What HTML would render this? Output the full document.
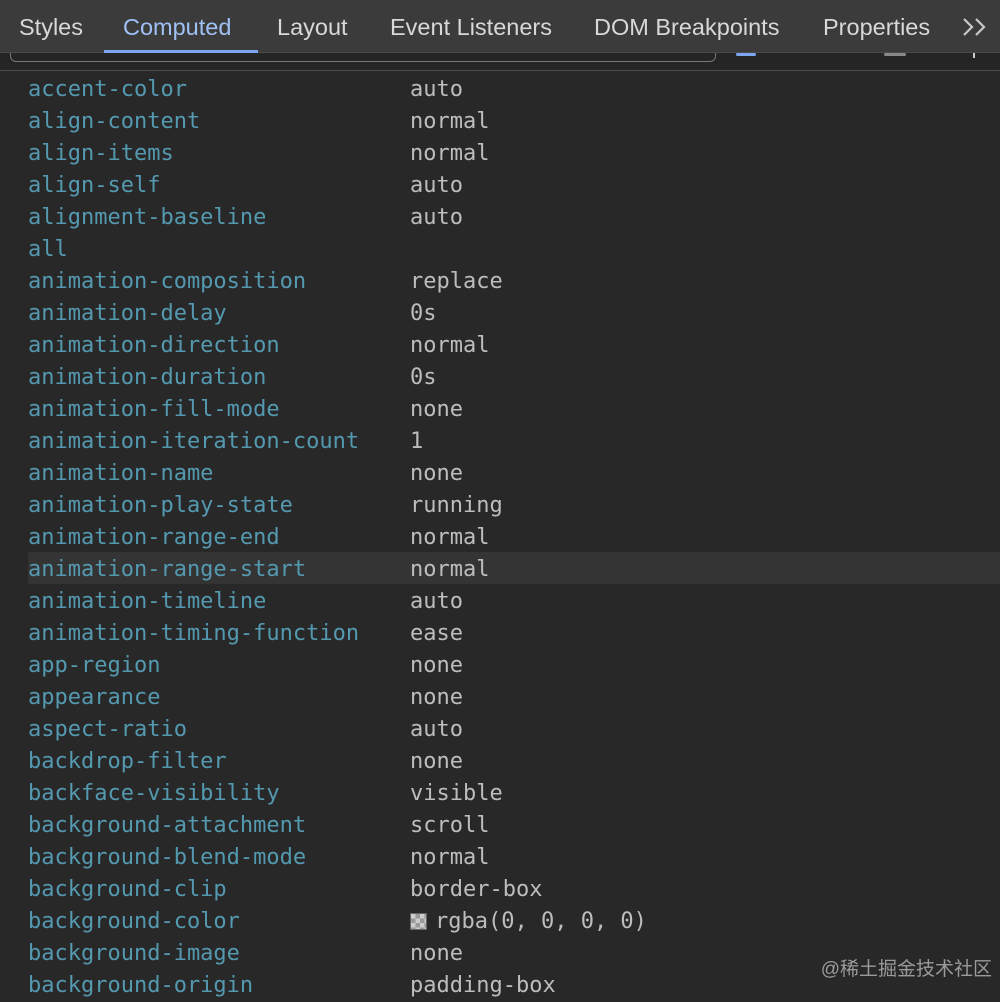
<!DOCTYPE html>
<html><head><meta charset="utf-8"><style>
*{margin:0;padding:0;box-sizing:border-box}
body{width:1000px;height:984px;overflow:hidden;background:#282828;position:relative;font-family:"DejaVu Sans Mono","Liberation Mono",monospace}
.hdr{position:absolute;left:0;top:0;width:1000px;height:53px;background:#3b3b3b;border-bottom:1px solid #4a4a4a}
.tab{position:absolute;top:14px;font:23.5px "Liberation Sans",sans-serif;color:#d8d8d8}
.ul{position:absolute;left:104px;top:50px;width:154px;height:3px;background:#7ca7f0}
.filt{position:absolute;left:10px;top:40px;width:706px;height:22px;border:1.5px solid #777;border-radius:6px;border-top:none}
.sep{position:absolute;left:0;top:70px;width:1000px;height:1px;background:#4a4a4a}
.mid{position:absolute;top:53px;left:0;width:1000px;height:17px;background:#252525}
.row{position:absolute;left:28px;width:972px;height:32px;font-size:22px;line-height:32px;white-space:pre}
.row span{position:absolute;top:2px}
.p{left:0;color:#5499b0}
.v{left:382px;color:#bdbdbd}
.hl{background:#343434}
.sw{display:inline-block;position:static!important;width:17px;height:17px;vertical-align:-2px;margin-right:8px;background:conic-gradient(#999 0 25%,#ccc 0 50%,#999 0 75%,#ccc 0);background-size:9px 9px;border:1px solid #666}
.wm{position:absolute;right:8px;top:954px;font:19px "Liberation Sans","Noto Sans CJK SC",sans-serif;color:#9a9a9a}
</style></head><body>
<div class="mid"></div>
<div class="filt"></div>
<div style="position:absolute;left:736px;top:53px;width:20px;height:3px;background:#7ca7f0;border-radius:2px"></div>
<div style="position:absolute;left:884px;top:53px;width:22px;height:3px;background:#888;border-radius:2px"></div>
<div style="position:absolute;left:973px;top:53px;width:2px;height:5px;background:#ccc"></div>
<div class="sep"></div>
<div class="hdr">
<span class="tab" style="left:19px">Styles</span>
<span class="tab" style="left:123px;color:#9fc0f4">Computed</span>
<span class="tab" style="left:277px">Layout</span>
<span class="tab" style="left:390px">Event Listeners</span>
<span class="tab" style="left:594px">DOM Breakpoints</span>
<span class="tab" style="left:823px">Properties</span>
<svg style="position:absolute;left:962px;top:17px" width="26" height="20" viewBox="0 0 26 20"><path d="M2 2l8 8-8 8M14 2l8 8-8 8" fill="none" stroke="#c8c8c8" stroke-width="2.2"/></svg>
<div class="ul"></div>
</div>
<div class="row" style="top:72px"><span class="p">accent-color</span><span class="v">auto</span></div>
<div class="row" style="top:104px"><span class="p">align-content</span><span class="v">normal</span></div>
<div class="row" style="top:136px"><span class="p">align-items</span><span class="v">normal</span></div>
<div class="row" style="top:168px"><span class="p">align-self</span><span class="v">auto</span></div>
<div class="row" style="top:200px"><span class="p">alignment-baseline</span><span class="v">auto</span></div>
<div class="row" style="top:232px"><span class="p">all</span></div>
<div class="row" style="top:264px"><span class="p">animation-composition</span><span class="v">replace</span></div>
<div class="row" style="top:296px"><span class="p">animation-delay</span><span class="v">0s</span></div>
<div class="row" style="top:328px"><span class="p">animation-direction</span><span class="v">normal</span></div>
<div class="row" style="top:360px"><span class="p">animation-duration</span><span class="v">0s</span></div>
<div class="row" style="top:392px"><span class="p">animation-fill-mode</span><span class="v">none</span></div>
<div class="row" style="top:424px"><span class="p">animation-iteration-count</span><span class="v">1</span></div>
<div class="row" style="top:456px"><span class="p">animation-name</span><span class="v">none</span></div>
<div class="row" style="top:488px"><span class="p">animation-play-state</span><span class="v">running</span></div>
<div class="row" style="top:520px"><span class="p">animation-range-end</span><span class="v">normal</span></div>
<div class="row hl" style="top:552px"><span class="p">animation-range-start</span><span class="v">normal</span></div>
<div class="row" style="top:584px"><span class="p">animation-timeline</span><span class="v">auto</span></div>
<div class="row" style="top:616px"><span class="p">animation-timing-function</span><span class="v">ease</span></div>
<div class="row" style="top:648px"><span class="p">app-region</span><span class="v">none</span></div>
<div class="row" style="top:680px"><span class="p">appearance</span><span class="v">none</span></div>
<div class="row" style="top:712px"><span class="p">aspect-ratio</span><span class="v">auto</span></div>
<div class="row" style="top:744px"><span class="p">backdrop-filter</span><span class="v">none</span></div>
<div class="row" style="top:776px"><span class="p">backface-visibility</span><span class="v">visible</span></div>
<div class="row" style="top:808px"><span class="p">background-attachment</span><span class="v">scroll</span></div>
<div class="row" style="top:840px"><span class="p">background-blend-mode</span><span class="v">normal</span></div>
<div class="row" style="top:872px"><span class="p">background-clip</span><span class="v">border-box</span></div>
<div class="row" style="top:904px"><span class="p">background-color</span><span class="v"><span class="sw"></span>rgba(0, 0, 0, 0)</span></div>
<div class="row" style="top:936px"><span class="p">background-image</span><span class="v">none</span></div>
<div class="row" style="top:968px"><span class="p">background-origin</span><span class="v">padding-box</span></div>
<div class="wm">@稀土掘金技术社区</div>
</body></html>
